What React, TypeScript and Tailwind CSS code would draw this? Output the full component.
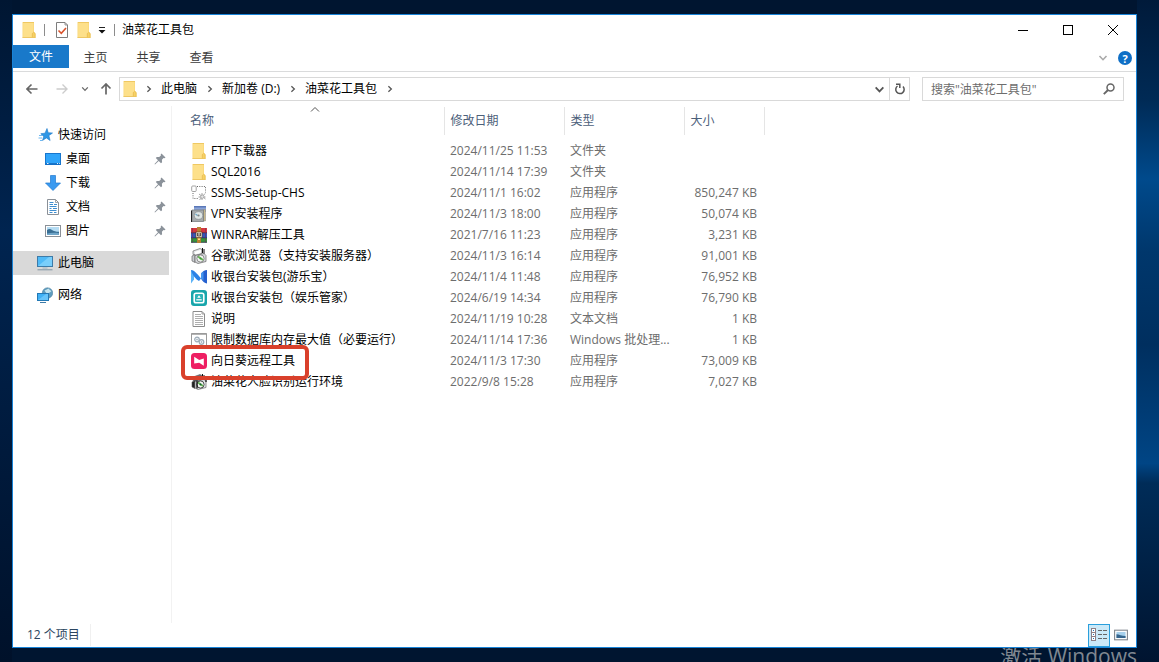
import { useState } from "react";
import type { ReactNode } from "react";

type IconName =
  | "folder"
  | "ssms"
  | "vpn"
  | "winrar"
  | "installer"
  | "youle"
  | "yule"
  | "text"
  | "batch"
  | "sunflower"
  | "face";

type FileRow = {
  icon: IconName;
  name: string;
  date: string;
  type: string;
  size: string;
  marked?: boolean;
};

const files: FileRow[] = [
  { icon: "folder", name: "FTP下载器", date: "2024/11/25 11:53", type: "文件夹", size: "" },
  { icon: "folder", name: "SQL2016", date: "2024/11/14 17:39", type: "文件夹", size: "" },
  { icon: "ssms", name: "SSMS-Setup-CHS", date: "2024/11/1 16:02", type: "应用程序", size: "850,247 KB" },
  { icon: "vpn", name: "VPN安装程序", date: "2024/11/3 18:00", type: "应用程序", size: "50,074 KB" },
  { icon: "winrar", name: "WINRAR解压工具", date: "2021/7/16 11:23", type: "应用程序", size: "3,231 KB" },
  { icon: "installer", name: "谷歌浏览器（支持安装服务器）", date: "2024/11/3 16:14", type: "应用程序", size: "91,001 KB" },
  { icon: "youle", name: "收银台安装包(游乐宝）", date: "2024/11/4 11:48", type: "应用程序", size: "76,952 KB" },
  { icon: "yule", name: "收银台安装包（娱乐管家）", date: "2024/6/19 14:34", type: "应用程序", size: "76,790 KB" },
  { icon: "text", name: "说明", date: "2024/11/19 10:28", type: "文本文档", size: "1 KB" },
  { icon: "batch", name: "限制数据库内存最大值（必要运行）", date: "2024/11/14 17:36", type: "Windows 批处理...", size: "1 KB" },
  { icon: "sunflower", name: "向日葵远程工具", date: "2024/11/3 17:30", type: "应用程序", size: "73,009 KB", marked: true },
  { icon: "face", name: "油菜花人脸识别运行环境", date: "2022/9/8 15:28", type: "应用程序", size: "7,027 KB" },
];

function Svg({ children, className = "size-4" }: { children: ReactNode; className?: string }) {
  return (
    <svg viewBox="0 0 16 16" className={`shrink-0 ${className}`} fill="none" aria-hidden="true">
      {children}
    </svg>
  );
}

function FolderIcon({ className }: { className?: string }) {
  return (
    <Svg className={className}>
      <path d="M1.500 0H13v10l1.500 1.500V16h-13z" fill="#fad778" />
      <path d="M2.200.8h10.100v10L11 12v3.200H2.200z" fill="#fde08a" />
      <path d="M2 .5h11" stroke="#efc862" />
      <path d="M11.300 15.500v-4l1.400-1.300 1.400 1.300v4" fill="#f7d164" stroke="#e5b94c" strokeWidth=".7" />
      <path d="M1.500 15.600h13" stroke="#e8c05a" strokeWidth=".8" />
    </Svg>
  );
}

function InstallerIcon({ dark = false }: { dark?: boolean }) {
  return (
    <Svg>
      <path d="M2 3l7-2.500 2 1v4l-7 2-2-1z" fill={dark ? "#6b7280" : "#e3e5e8"} stroke="#555" strokeWidth=".6" />
      <path d="M4 3.800l6-2v3l-6 1.800z" fill={dark ? "#222" : "#fff"} />
      <path d="M11.500 0v5M13 1v5" stroke="#111" />
      <path d="M1 8l3-1.500v8L1 13z" fill={dark ? "#222" : "#c9ccd1"} stroke="#555" strokeWidth=".6" />
      <path d="M4 7.500l9-2 2 2v6l-8 2-3-1.500z" fill={dark ? "#e5e7eb" : "#d8dadd"} stroke="#666" strokeWidth=".7" />
      <circle cx="9.500" cy="10.500" r="3.600" fill="#f4f6f4" stroke={dark ? "#222" : "#777"} strokeWidth=".8" />
      <path d="M7 8.500l5 3.500" stroke="#62b152" strokeWidth="1.800" />
      <circle cx="9.500" cy="10.500" r="1" fill={dark ? "#166534" : "#3f9b3a"} />
      {dark && <path d="M6 6.500v8M12.500 3l2.500 1v4" stroke="#111" strokeWidth="1.300" />}
    </Svg>
  );
}

function FileIcon({ name }: { name: IconName }) {
  switch (name) {
    case "folder":
      return <FolderIcon />;
    case "ssms":
      return (
        <Svg>
          <rect x=".7" y="1" width="4.500" height="5.500" rx="1" stroke="#999" strokeWidth=".9" />
          <path d="M6 1.500h8.500v6" stroke="#666" strokeDasharray="1 1.300" />
          <path d="M2 8v5.500h5" stroke="#666" strokeDasharray="1 1.300" />
          <path d="M8 9l6.500 5M14 8.500L8.500 15M11 8v7M7.500 12h7" stroke="#999" strokeWidth=".9" />
          <circle cx="11.300" cy="11.700" r="1.700" fill="#e5e5e5" stroke="#999" strokeWidth=".7" />
        </Svg>
      );
    case "vpn":
      return (
        <Svg>
          <path d="M3 0h12v6H3z" fill="#8aa4d8" />
          <path d="M3 0h12v1.500H3z" fill="#5b78b8" />
          <path d="M12 3.500h2.500V15H12z" fill="#c9b98a" stroke="#888" strokeWidth=".5" />
          <path d="M1 4h11.500v11.500H1z" fill="#a7abad" stroke="#707579" strokeWidth=".7" />
          <path d="M.5 4.500V16" stroke="#222" />
          <ellipse cx="7.500" cy="9.500" rx="4.200" ry="3.800" fill="#dfe6e5" stroke="#8a9192" strokeWidth=".7" />
          <path d="M4.500 8l2 1.500" stroke="#6aa7c7" strokeWidth="1.200" />
          <circle cx="7.500" cy="9.500" r="1.100" fill="#7d8486" />
        </Svg>
      );
    case "winrar":
      return (
        <Svg>
          <rect x="0" y="1" width="16" height="5" fill="#d5383e" />
          <rect x="0" y="6" width="16" height="5" fill="#3556b8" />
          <rect x="0" y="11" width="16" height="4.500" fill="#36953b" />
          <path d="M0 5.800h16M0 10.800h16M0 15.300h16" stroke="#2c2550" strokeWidth=".7" />
          <path d="M1.500 1v14.500M14.500 1v14.500" stroke="#70305c" strokeWidth=".6" />
          <rect x="6" y="0" width="4" height="16" fill="#a3682a" />
          <path d="M7 0v5M9 0v5M7 11v5M9 11v5" stroke="#d9a441" strokeWidth=".8" />
          <rect x="5" y="5" width="6" height="5.500" fill="#f3ead7" stroke="#5d3a19" strokeWidth=".6" />
          <path d="M6.500 6v3h3V6M8 6v2.500" stroke="#3c2b2b" strokeWidth=".8" />
          <rect x="7" y="11.500" width="2" height="1.500" fill="#ffe082" />
        </Svg>
      );
    case "installer":
      return <InstallerIcon />;
    case "face":
      return <InstallerIcon dark />;
    case "youle":
      return (
        <Svg>
          <path d="M0 1l3 1.500v8L0 14.500z" fill="#5cb3f7" />
          <path d="M0 1c3 0 5.500 3 10 8.500L8 12C5 10.500 1.500 6.500 0 1z" fill="#2b82e6" />
          <path d="M10 4.500C11.500 2.500 13.500 1.200 16 1v13.500c-2.500-.5-4.500-2-6-5z" fill="#2560cf" />
          <path d="M10 4.500l2.500-2v9.300L10 9.500z" fill="#4595ee" />
        </Svg>
      );
    case "yule":
      return (
        <Svg>
          <rect width="16" height="16" rx="3" fill="#17a5ab" />
          <rect x="3.200" y="3.200" width="9.600" height="9.600" rx="1.800" stroke="#fff" strokeWidth="1.600" fill="#2cb3b8" />
          <path d="M5.300 9.800h5.400" stroke="#fff" strokeWidth="1.200" />
          <path d="M8 5.200l1.800 2.600H6.200z" fill="#fff" />
        </Svg>
      );
    case "text":
      return (
        <Svg>
          <path d="M2 .5h9L13.500 3v12.500H2z" fill="#fff" stroke="#8b8b8b" />
          <path d="M11 .5V3h2.500" stroke="#8b8b8b" strokeWidth=".8" />
          <path d="M4 3.500h6M4 5.500h8M4 7.500h8M4 9.500h8M4 11.500h8M4 13.500h8" stroke="#a5a5a5" strokeWidth=".9" />
        </Svg>
      );
    case "batch":
      return (
        <Svg>
          <path d="M.5 1.500h15v13H.5z" fill="#fff" stroke="#9a9a9a" />
          <path d="M.5 2h15" stroke="#9a9a9a" strokeWidth="1.500" />
          <circle cx="6" cy="7.500" r="2.300" stroke="#9dabb7" strokeWidth="1.200" fill="#eef2f5" />
          <circle cx="10.500" cy="10" r="2.300" stroke="#9dabb7" strokeWidth="1.200" fill="#eef2f5" />
          <circle cx="6" cy="7.500" r=".7" fill="#8fa0ae" />
          <circle cx="10.500" cy="10" r=".7" fill="#8fa0ae" />
        </Svg>
      );
    case "sunflower":
      return (
        <Svg>
          <rect width="16" height="16" rx="3.500" fill="#ee1f63" />
          <path d="M3.200 3.700l5 3.300 4.600-1.500v7.300L8.200 9.800l-5 .7z" fill="#fff" />
        </Svg>
      );
  }
}

function Chevron({ className }: { className: string }) {
  return (
    <svg viewBox="0 0 10 10" className={`shrink-0 ${className}`} fill="none" stroke="currentColor" strokeWidth="1.600" aria-hidden="true">
      <path d="M1.500 3l3.500 3.700L8.500 3" />
    </svg>
  );
}

function PinIcon() {
  return (
    <svg viewBox="0 0 12 12" className="size-3 shrink-0 text-[#8b929a]" fill="currentColor" aria-hidden="true">
      <path d="M7.500.5l4 4-1 .8-1-.2-1.600 1.700.2 2.400-1.100 1L4.700 8 1 11.500.5 11 4 7.300 1.800 5l1-1.100 2.400.2 1.700-1.600-.2-1z" />
    </svg>
  );
}

function StarIcon() {
  return (
    <Svg>
      <path d="M9 1.500l1.200 4.200 4.300.3-3.600 2.600 1.200 4.900-3.700-2.600L4.500 13.500l1.200-4.100L2.800 6.700l4.200-.5z" fill="#2f97e5" stroke="#1b78c9" strokeWidth=".6" />
      <path d="M1 8.500h3M.5 11h3.500M2 13.500h2" stroke="#6db8f2" />
    </Svg>
  );
}

function DesktopIcon() {
  return (
    <Svg>
      <rect x=".5" y="2.500" width="15" height="11" fill="#2fa4fa" stroke="#1876cd" />
      <path d="M1 12.800h14" stroke="#0e62b5" />
      <path d="M2 12.500h1.500M12 12.500h1M14 12.500h.8" stroke="#fff" strokeWidth=".9" />
    </Svg>
  );
}

function DownloadIcon() {
  return (
    <Svg>
      <path d="M5.500.5h5v7.500h5L8 15.500.5 8h5z" fill="#3a9af0" stroke="#2179cf" strokeWidth=".7" />
    </Svg>
  );
}

function DocumentIcon() {
  return (
    <Svg>
      <path d="M2.500.5h8L13.500 3.500v12h-11z" fill="#fff" stroke="#8a9097" />
      <path d="M10.500.5v3h3" stroke="#8a9097" strokeWidth=".8" />
      <path d="M4.500 3.500h4M4.500 5.500H8M9 5.500h3M4.500 7.500h7M4.500 9.500h2M8 9.500h4M4.500 11.500h7M4.500 13.500h3M9 13.500h2.500" stroke="#3f8ed0" />
    </Svg>
  );
}

function PictureIcon() {
  return (
    <Svg>
      <rect x=".5" y="2.500" width="15" height="11" fill="#fff" stroke="#8a9097" />
      <rect x="2" y="4" width="12" height="8" fill="#b5dcf3" />
      <path d="M2 7c2-1.500 3.500-1 5 0s4 1.800 7 1.800V12H2z" fill="#3a6f94" />
      <path d="M2 10.500c4-.8 8-.8 12-.3V12H2z" fill="#6fa5c8" />
    </Svg>
  );
}

function ComputerIcon() {
  return (
    <Svg>
      <rect x=".5" y="1.500" width="15" height="10" fill="#50baf7" stroke="#3d7ba8" />
      <path d="M1 11L12 2h3v9z" fill="#79cefb" />
      <path d="M5.500 13h5" stroke="#9fb4c2" />
      <path d="M.5 14.800h15" stroke="#7f95a3" />
    </Svg>
  );
}

function NetworkIcon() {
  return (
    <Svg>
      <circle cx="10.500" cy="6" r="5.200" fill="#5f9dbf" stroke="#4b7f9f" strokeWidth=".6" />
      <path d="M7.500 3.500c2-.5 2.500-1.500 4-2 1 1 1.500 2 3 2.500-1 2-3.500 1.500-4.500 3z" fill="#c5e4ee" />
      <rect x=".5" y="6.500" width="11" height="7" fill="#3fb0f5" stroke="#2378b4" />
      <path d="M1 13L9 7h2v6z" fill="#66c4fa" />
      <path d="M3 15.500h6" stroke="#3d7ba8" />
    </Svg>
  );
}

const quickItems = [
  { label: "桌面", icon: <DesktopIcon /> },
  { label: "下载", icon: <DownloadIcon /> },
  { label: "文档", icon: <DocumentIcon /> },
  { label: "图片", icon: <PictureIcon /> },
];

function TitleBar() {
  return (
    <div className="flex h-[30px] items-center pl-2">
      <FolderIcon />
      <span className="ml-[7px] h-3 w-px bg-[#8c8c8c]" />
      <button type="button" aria-label="属性" className="ml-[9px]">
        <Svg>
          <path d="M2.500.5H11L13.500 3v12.500h-11z" fill="#fff" stroke="#7d7d7d" />
          <path d="M11 .5V3h2.500" stroke="#7d7d7d" strokeWidth=".8" />
          <path d="M4.500 8.500l2.800 2.800L12 6" stroke="#d9532c" strokeWidth="1.600" />
        </Svg>
      </button>
      <button type="button" aria-label="新建文件夹" className="ml-[6px]">
        <FolderIcon />
      </button>
      <button type="button" aria-label="自定义快速访问工具栏" className="ml-[6px]">
        <svg viewBox="0 0 8 8" className="size-2" aria-hidden="true">
          <path d="M1 1.500h6" stroke="#222" />
          <path d="M.5 4h7L4 7.500z" fill="#111" />
        </svg>
      </button>
      <span className="ml-2 h-3 w-px bg-[#8c8c8c]" />
      <h1 className="ml-[7px] text-black">油菜花工具包</h1>
      <div className="ml-auto flex h-full">
        <button type="button" aria-label="最小化" className="flex w-[46px] items-center justify-center">
          <svg viewBox="0 0 10 10" className="size-[10px]" stroke="#000" aria-hidden="true">
            <path d="M0 5.500h10" />
          </svg>
        </button>
        <button type="button" aria-label="最大化" className="flex w-11 items-center justify-center">
          <svg viewBox="0 0 10 10" className="size-[10px]" fill="none" stroke="#000" aria-hidden="true">
            <rect x=".5" y=".5" width="9" height="9" />
          </svg>
        </button>
        <button type="button" aria-label="关闭" className="flex w-[46px] items-center justify-center">
          <svg viewBox="0 0 10 10" className="size-[10px]" stroke="#000" aria-hidden="true">
            <path d="M0 0l10 10M10 0L0 10" />
          </svg>
        </button>
      </div>
    </div>
  );
}

function Ribbon() {
  return (
    <div className="flex h-[27px] items-start border-b border-[#dadbdc] text-[#3b3b3b]">
      <button type="button" className="h-[23px] w-14 bg-[#1979ca] text-white">文件</button>
      {["主页", "共享", "查看"].map((tab) => (
        <button type="button" key={tab} className="h-[25px] w-[53px]">{tab}</button>
      ))}
      <div className="ml-auto flex h-[26px] items-center gap-[10px] pr-1">
        <button type="button" aria-label="展开功能区">
          <Chevron className="size-[10px] text-[#a9a9a9]" />
        </button>
        <button type="button" aria-label="帮助" className="flex size-[14px] items-center justify-center rounded-full bg-[#0f6fc6] text-[11px] leading-none font-bold text-white">
          ?
        </button>
      </div>
    </div>
  );
}

function AddressBar() {
  const [query, setQuery] = useState("");

  return (
    <div className="flex h-[34px] items-center pr-3 pl-[13px] text-black">
      <div className="flex items-center text-[#666]">
        <button type="button" aria-label="后退">
          <svg viewBox="0 0 12 12" className="size-3" fill="none" stroke="currentColor" strokeWidth="1.600" aria-hidden="true">
            <path d="M11.500 6H1M5.500 1.500L1 6l4.500 4.500" />
          </svg>
        </button>
        <button type="button" aria-label="前进" className="ml-[18px] text-[#ccc]">
          <svg viewBox="0 0 12 12" className="size-3" fill="none" stroke="currentColor" strokeWidth="1.400" aria-hidden="true">
            <path d="M.5 6H11M6.500 1.500L11 6l-4.500 4.500" />
          </svg>
        </button>
        <button type="button" aria-label="最近浏览的位置" className="ml-[13px]">
          <Chevron className="size-2" />
        </button>
        <button type="button" aria-label="向上" className="ml-[11px]">
          <svg viewBox="0 0 12 12" className="size-3" fill="none" stroke="currentColor" strokeWidth="1.700" aria-hidden="true">
            <path d="M6 11.500V1M1.500 5.500L6 1l4.500 4.500" />
          </svg>
        </button>
      </div>
      <nav aria-label="地址" className="ml-[7px] flex h-6 flex-1 items-center border border-[#d9d9d9] pl-[2px]">
        <FolderIcon />
        {["此电脑", "新加卷 (D:)", "油菜花工具包"].map((part) => (
          <a href="#" key={part} className="flex items-center">
            <Chevron className="mx-[7px] size-2 -rotate-90 text-[#555]" />
            <span className="pr-[2px] pl-px">{part}</span>
          </a>
        ))}
        <Chevron className="ml-[7px] size-2 -rotate-90 text-[#555]" />
        <button type="button" aria-label="以前的位置" className="ml-auto mr-1">
          <Chevron className="size-[11px] text-[#555]" />
        </button>
        <button type="button" aria-label="刷新" className="flex h-full w-5 items-center justify-center border-l border-[#d9d9d9]">
          <svg viewBox="0 0 12 12" className="size-3" fill="none" stroke="#555" strokeWidth="1.500" aria-hidden="true">
            <path d="M9 3.500A4.200 4.200 0 1 1 3.500 3" />
            <path d="M2 1.200h3.800V5" />
          </svg>
        </button>
      </nav>
      <label className="ml-3 flex h-6 w-[202px] items-center border border-[#d9d9d9] px-2">
        <span className="sr-only">搜索</span>
        <input
          type="text"
          value={query}
          onChange={(e) => setQuery(e.target.value)}
          placeholder={'搜索"油菜花工具包"'}
          className="h-[22px] min-w-0 flex-1 bg-transparent leading-5 outline-none placeholder:text-[#6d6d6d]"
        />
        <svg viewBox="0 0 12 12" className="size-3 shrink-0" fill="none" stroke="#666" strokeWidth="1.500" aria-hidden="true">
          <circle cx="7.500" cy="4.500" r="3.500" />
          <path d="M5 7L.8 11.200" strokeWidth="1.900" />
        </svg>
      </label>
    </div>
  );
}

function Sidebar() {
  return (
    <nav aria-label="导航窗格" className="flex w-[159px] shrink-0 flex-col gap-2 border-r border-[#f2f2f2] pt-[17px] pr-[2px] text-black">
      <div>
        <a href="#" className="flex h-6 items-center gap-1 pl-[25px]">
          <StarIcon />
          快速访问
        </a>
        {quickItems.map((item) => (
          <a href="#" key={item.label} className="flex h-6 items-center gap-1 pr-[3px] pl-8">
            {item.icon}
            <span className="ml-px flex-1">{item.label}</span>
            <PinIcon />
          </a>
        ))}
      </div>
      <a href="#" aria-current="page" className="flex h-6 items-center gap-1 bg-[#d9d9d9] pl-6">
        <ComputerIcon />
        <span className="ml-px">此电脑</span>
      </a>
      <a href="#" className="flex h-6 items-center gap-1 pl-6">
        <NetworkIcon />
        <span className="ml-px">网络</span>
      </a>
    </nav>
  );
}

function FileTable() {
  return (
    <table className="w-[592px] table-fixed border-collapse text-left text-[#6d6d6d]">
      <colgroup>
        <col className="w-[272px]" />
        <col className="w-[120px]" />
        <col className="w-[120px]" />
        <col className="w-[80px]" />
      </colgroup>
      <thead className="text-[#4c607a]">
        <tr className="h-7">
          <th className="border-r border-[#e5e5e5] p-0 pl-[18px] align-top font-normal">
            <button type="button" className="flex w-full flex-col items-start pr-1">
              <svg viewBox="0 0 10 5" className="h-[5px] w-[10px] self-center" fill="none" stroke="#555" aria-hidden="true">
                <path d="M1 4.500l4-4 4 4" />
              </svg>
              <span className="leading-[18px]">名称</span>
            </button>
          </th>
          {["修改日期", "类型", "大小"].map((label) => (
            <th key={label} className="border-r border-[#e5e5e5] p-0 pl-[6px] font-normal">
              <button type="button">{label}</button>
            </th>
          ))}
        </tr>
      </thead>
      <tbody className="before:block before:h-[5px]">
        {files.map((file) => (
          <tr key={file.name} className="h-[21px]">
            <td className="relative p-0 pl-[19px] whitespace-nowrap text-black">
              <div className="flex items-center gap-1">
                <FileIcon name={file.icon} />
                {file.name}
              </div>
              {file.marked && (
                <span className="absolute -top-[5px] left-[9px] z-10 h-[35px] w-32 rounded-md border-4 border-[#d9402b]" />
              )}
            </td>
            <td className="p-0 pl-[6px] whitespace-nowrap">{file.date}</td>
            <td className="p-0 pl-[6px] whitespace-nowrap">{file.type}</td>
            <td className="p-0 pr-[7px] text-right whitespace-nowrap">{file.size}</td>
          </tr>
        ))}
      </tbody>
    </table>
  );
}

function StatusBar() {
  return (
    <footer className="flex h-6 items-center justify-between pr-2 pl-[14px] text-[#2b4560]">
      <span className="border-r border-[#f0f0f0] pr-[10px] leading-[22px]">{files.length} 个项目</span>
      <div className="flex items-center gap-1">
        <button type="button" aria-label="详细信息" className="flex h-[23px] w-[22px] items-center justify-center border border-[#2a9fdc] bg-[#cbe9f8]">
          <svg viewBox="0 0 18 16" className="h-4 w-[18px]" fill="none" aria-hidden="true">
            <rect x="1.500" y="1.500" width="4" height="4" fill="#fff" stroke="#8c7f86" />
            <rect x="1.500" y="5.500" width="4" height="4" fill="#fff" stroke="#8c7f86" />
            <rect x="1.500" y="9.500" width="4" height="4" fill="#fff" stroke="#8c7f86" />
            <path d="M3 3.500h1M3 7.500h1M3 11.500h1" stroke="#2874b5" />
            <path d="M8 3.500h4M13 3.500h4M8 7.500h4M13 7.500h4M8 11.500h4M13 11.500h4" stroke="#666" />
          </svg>
        </button>
        <button type="button" aria-label="大缩略图">
          <Svg className="size-[14px]">
            <rect x=".7" y="2.500" width="14.600" height="11" fill="#fff" stroke="#7c8289" strokeWidth="1.200" />
            <rect x="2.800" y="4.500" width="10.400" height="7" fill="#a6d0ec" />
            <path d="M2.800 7c3 0 6 2 10.400 2v2.500H2.800z" fill="#35658d" />
          </Svg>
        </button>
      </div>
    </footer>
  );
}

export default function App() {
  return (
    <div className="flex h-screen bg-[#001530] font-['Open_Sans','Noto_Sans_CJK_SC',sans-serif] text-xs">
      <div className="w-3 shrink-0 bg-linear-to-b from-[#001632] via-[#002450] via-35% to-[#00112a]" />
      <div className="flex min-w-0 flex-1 flex-col pt-[14px]">
        <main className="flex min-h-0 flex-1 flex-col border border-[#1883d7] bg-white">
          <TitleBar />
          <Ribbon />
          <AddressBar />
          <div className="flex min-h-0 flex-1">
            <Sidebar />
            <section aria-label="文件列表" className="min-w-0 flex-1 pt-px">
              <FileTable />
            </section>
          </div>
          <StatusBar />
        </main>
        <p className="h-[14px] overflow-hidden text-right text-[21px] leading-4 text-[#7f8790]">激活 Windows</p>
      </div>
      <div className="w-[22px] shrink-0 bg-[linear-gradient(#001a3a,#002a55_15%,#004a8c_27%,#00376c_38%,#002f5f_52%,#004585_70%,#002c58_73%,#001430)]" />
    </div>
  );
}
